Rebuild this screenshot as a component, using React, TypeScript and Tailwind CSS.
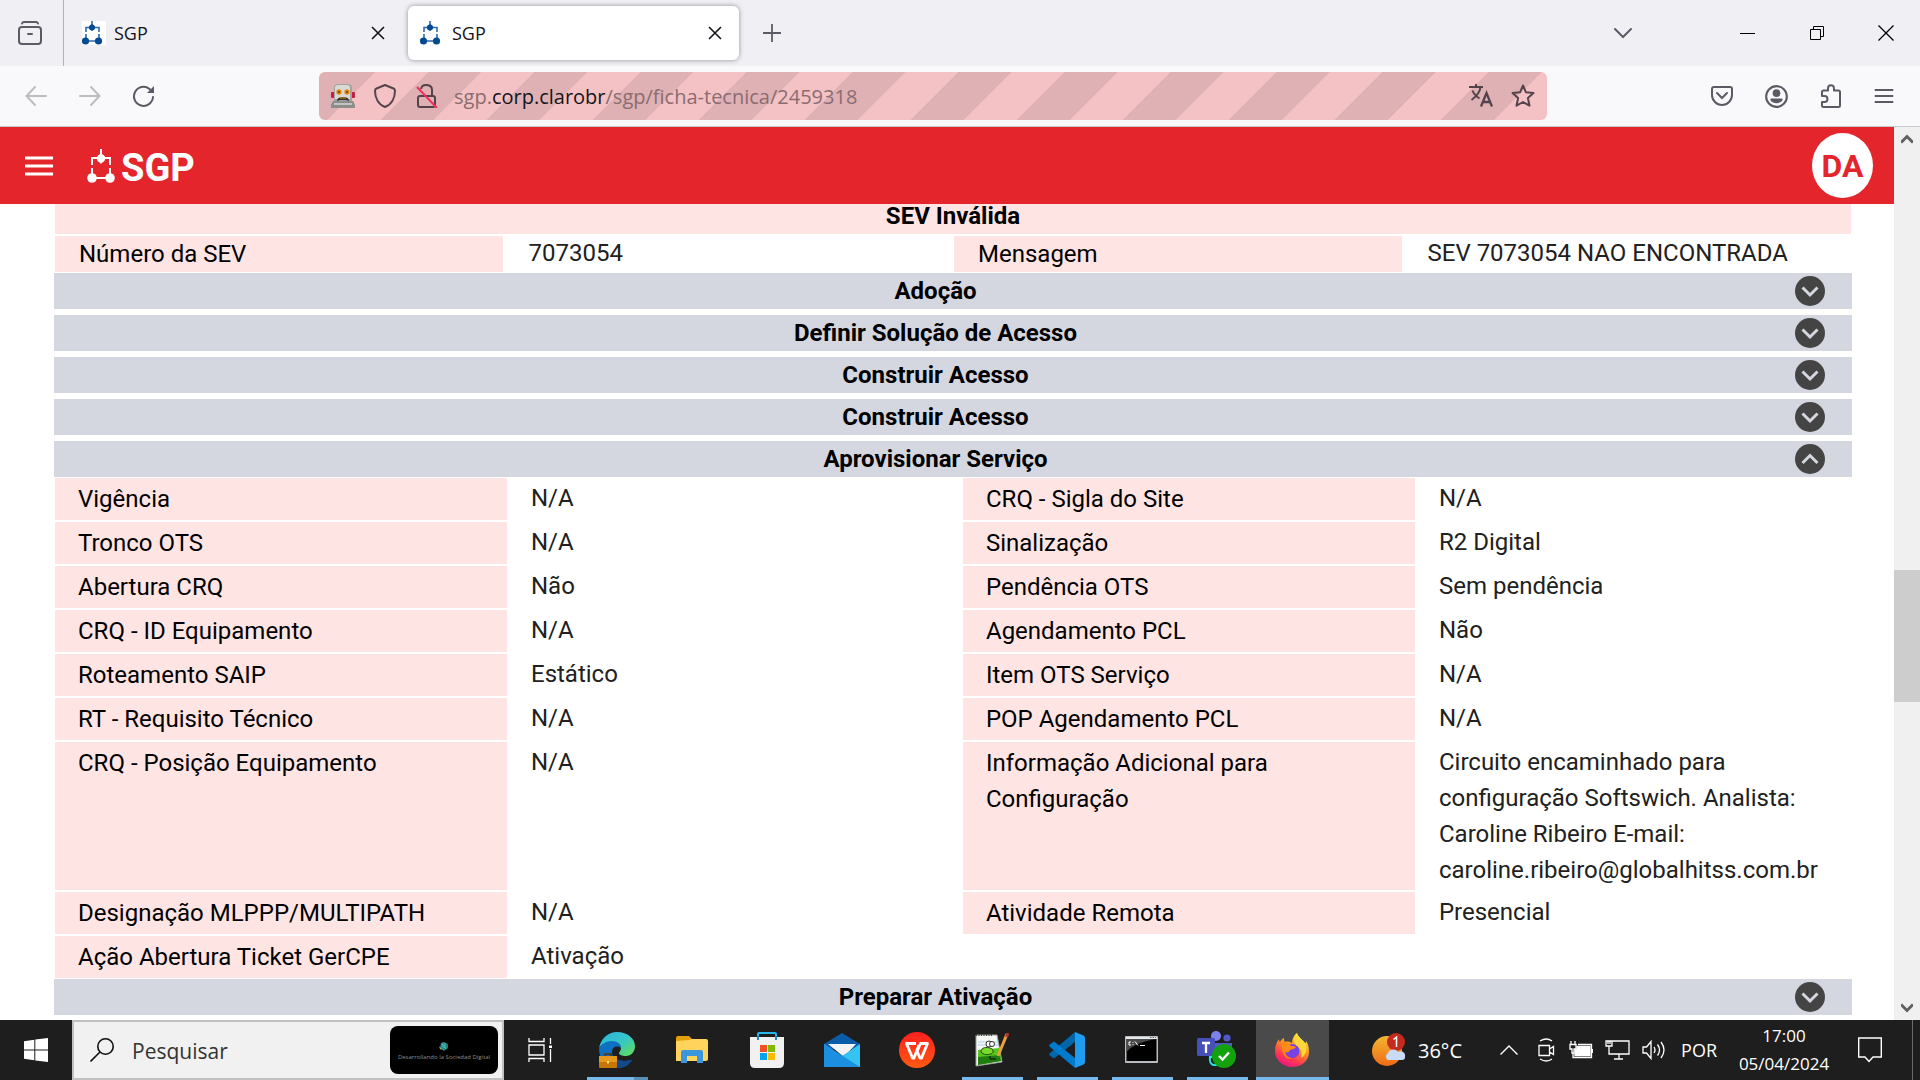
import { useState, type ReactNode } from "react";

type Pair = { label: string; value: string };

const sevRows: Pair[][] = [
  [
    { label: "Número da SEV", value: "7073054" },
    { label: "Mensagem", value: "SEV 7073054 NAO ENCONTRADA" },
  ],
];

const serviceRows: Pair[][] = [
  [{ label: "Vigência", value: "N/A" }, { label: "CRQ - Sigla do Site", value: "N/A" }],
  [{ label: "Tronco OTS", value: "N/A" }, { label: "Sinalização", value: "R2 Digital" }],
  [{ label: "Abertura CRQ", value: "Não" }, { label: "Pendência OTS", value: "Sem pendência" }],
  [{ label: "CRQ - ID Equipamento", value: "N/A" }, { label: "Agendamento PCL", value: "Não" }],
  [{ label: "Roteamento SAIP", value: "Estático" }, { label: "Item OTS Serviço", value: "N/A" }],
  [{ label: "RT - Requisito Técnico", value: "N/A" }, { label: "POP Agendamento PCL", value: "N/A" }],
  [
    { label: "CRQ - Posição Equipamento", value: "N/A" },
    {
      label: "Informação Adicional para Configuração",
      value:
        "Circuito encaminhado para configuração Softswich. Analista: Caroline Ribeiro E-mail: caroline.ribeiro@globalhitss.com.br",
    },
  ],
  [{ label: "Designação MLPPP/MULTIPATH", value: "N/A" }, { label: "Atividade Remota", value: "Presencial" }],
  [{ label: "Ação Abertura Ticket GerCPE", value: "Ativação" }],
];

/* ---------- Browser chrome ---------- */

function Favicon({ plate = false }: { plate?: boolean }) {
  return (
    <svg viewBox="0 0 24 24" className="size-6 shrink-0" aria-hidden="true">
      {plate && <rect width="24" height="24" fill="#fff" />}
      <g fill="none" stroke="#2f6aa8" strokeWidth="1.6">
        <path d="M10 0v6M4 11V6.500h13V11M4 13v6M17 13v6M4 20h13" />
      </g>
      <g fill="#044a93">
        <path d="M6.500 6.500 10 3l3.500 3.500L10 10z" />
        <circle cx="10" cy="6.500" r="3" />
        <circle cx="3.500" cy="20" r="3.600" />
        <circle cx="16.500" cy="20" r="3.600" />
      </g>
    </svg>
  );
}

function CloseTab() {
  return (
    <button type="button" aria-label="Fechar aba" className="flex size-6 items-center justify-center">
      <svg viewBox="0 0 14 14" className="size-3.5" stroke="#15141a" strokeWidth="1.6" aria-hidden="true">
        <path d="M1 1l12 12M13 1L1 13" />
      </svg>
    </button>
  );
}

function TabStrip() {
  return (
    <div className="flex h-[66px] shrink-0 items-center bg-[#f0eff4]">
      <button type="button" aria-label="Firefox View" className="flex h-full w-16 items-center border-r border-[#b4b3b9] pl-[18px]">
        <svg viewBox="0 0 24 24" className="size-6" fill="none" stroke="#5b5b66" strokeWidth="2" strokeLinecap="round" aria-hidden="true">
          <path d="M4 2.500C4.300 1.600 5 1 6 1h12c1 0 1.700.6 2 1.500" />
          <rect x="1" y="6" width="22" height="17" rx="3" />
          <path d="M10 13h4" />
        </svg>
      </button>
      <div className="flex h-[54px] w-[344px] items-center pl-[18px] pr-[18px]">
        <Favicon plate />
        <span className="ml-2 flex-1 text-lg text-[#15141a]">SGP</span>
        <CloseTab />
      </div>
      <div className="flex h-[54px] w-[331px] items-center rounded-md bg-white pl-3 pr-3 shadow-[0_0_5px_rgba(0,0,0,0.4)]">
        <Favicon />
        <span className="ml-2 flex-1 text-lg text-[#15141a]">SGP</span>
        <CloseTab />
      </div>
      <button type="button" aria-label="Nova aba" className="ml-6">
        <svg viewBox="0 0 18 18" className="size-[18px]" stroke="#5b5b66" strokeWidth="1.8" aria-hidden="true">
          <path d="M9 0v18M0 9h18" />
        </svg>
      </button>
      <div className="ml-auto flex h-full items-center">
        <button type="button" aria-label="Listar abas" className="mr-[62px] flex w-14 justify-center">
          <svg viewBox="0 0 20 12" className="h-3 w-5" fill="none" stroke="#5b5b66" strokeWidth="2" strokeLinecap="round" aria-hidden="true">
            <path d="M2 2l8 8 8-8" />
          </svg>
        </button>
        <button type="button" aria-label="Minimizar" className="flex h-full w-[69px] items-center justify-center">
          <span className="h-px w-[15px] bg-black" />
        </button>
        <button type="button" aria-label="Restaurar" className="flex h-full w-[69px] items-center justify-center">
          <svg viewBox="0 0 14 14" className="size-3.5" fill="none" stroke="#000" aria-hidden="true">
            <path d="M.5 3.500h10v10h-10zM3.500 3.500v-3h10v10h-3" />
          </svg>
        </button>
        <button type="button" aria-label="Fechar" className="flex h-full w-[69px] items-center justify-center">
          <svg viewBox="0 0 16 16" className="size-4" stroke="#000" strokeWidth="1.300" aria-hidden="true">
            <path d="M.5.5l15 15M15.500.5l-15 15" />
          </svg>
        </button>
      </div>
    </div>
  );
}

function AddressBar() {
  return (
    <div className="mr-[164px] ml-[164px] flex h-12 flex-1 items-center rounded-md bg-[repeating-linear-gradient(-45deg,#f4c2c5_0px,#f4c2c5_37px,#dfb1b4_38px,#dfb1b4_75px)] pr-3 pl-3">
      <svg viewBox="0 0 24 24" className="size-6 shrink-0" aria-hidden="true">
        <rect x="0" y="8" width="4" height="6" rx="1" fill="#c41f45" />
        <rect x="20" y="8" width="4" height="6" rx="1" fill="#c41f45" />
        <path d="M3 4q0-4 4-4h10q4 0 4 4v13H3z" fill="#a3a3a0" />
        <path d="M4 4q0-3 3-3h9q3 0 3 3v11H4z" fill="#d9d9d5" />
        <path d="M2 17h20l2 4v3H0v-3z" fill="#8d8e8c" />
        <path d="M3 19h18v2H3z" fill="#c3c4c1" />
        <circle cx="8" cy="8" r="2.700" fill="#e68a12" />
        <circle cx="16" cy="8" r="2.700" fill="#e68a12" />
        <circle cx="8" cy="8" r="1" fill="#5a3b13" />
        <circle cx="16" cy="8" r="1" fill="#5a3b13" />
        <path d="M6 17q0-4 6-4t6 4l-3-1H9z" fill="#35312e" />
        <path d="M9 14h6" stroke="#e68a12" />
      </svg>
      <svg viewBox="0 0 22 24" className="ml-[19px] h-6 w-[22px] shrink-0" fill="none" stroke="#53444b" strokeWidth="2" strokeLinejoin="round" aria-hidden="true">
        <path d="M11 1l8.500 3.500q1.500.7 1.500 2.200C21 14 17.500 20.500 11 23 4.500 20.500 1 14 1 6.700q0-1.500 1.500-2.200z" />
      </svg>
      <svg viewBox="0 0 22 24" className="ml-5 h-6 w-[22px] shrink-0" fill="none" stroke="#53444b" strokeWidth="2" aria-hidden="true">
        <rect x="2" y="12" width="17" height="11" rx="2" />
        <path d="M5 5c1-6 11-5 11 1v6" />
        <path d="M1 3l20 21" stroke="#ee2f5b" />
      </svg>
      <div
        role="textbox"
        aria-label="Endereço"
        contentEditable
        suppressContentEditableWarning
        spellCheck={false}
        className="ml-4 flex-1 pt-0.5 text-xl whitespace-nowrap text-[#8a6c71] outline-none"
      >
        sgp.<span className="text-[#15141a]">corp.clarobr</span>/sgp/ficha-tecnica/2459318
      </div>
      <button type="button" aria-label="Traduzir página">
        <svg viewBox="0 0 24 24" className="size-6" fill="none" stroke="#53444b" strokeWidth="2" aria-hidden="true">
          <path d="M0 3h14M7 0v3M2.500 16C8 12 11 8 11.500 3M3.500 6.500c1 3 4 6 7 8" />
          <path d="M12 22.500L17.500 9 23 22.500M14 18h7" strokeWidth="2.300" />
        </svg>
      </button>
      <button type="button" aria-label="Favoritar" className="ml-[18px]">
        <svg viewBox="0 0 24 24" className="size-6" fill="none" stroke="#53444b" strokeWidth="2" strokeLinejoin="round" aria-hidden="true">
          <path d="M12 1.500l3 6.800 7.500.8-5.600 5 1.600 7.600L12 18l-6.500 3.700 1.600-7.600-5.600-5 7.500-.8z" />
        </svg>
      </button>
    </div>
  );
}

function Toolbar() {
  return (
    <div className="flex h-[61px] shrink-0 items-center border-b border-[#c9c9cc] bg-[#f9f9fb] pr-[26px] pl-[25px]">
      <button type="button" aria-label="Voltar">
        <svg viewBox="0 0 22 20" className="h-5 w-[22px]" fill="none" stroke="#bdbcc2" strokeWidth="2" strokeLinecap="round" aria-hidden="true">
          <path d="M21 10H1.500M10 1L1.500 10l8.500 9" />
        </svg>
      </button>
      <button type="button" aria-label="Avançar" className="ml-8">
        <svg viewBox="0 0 22 20" className="h-5 w-[22px]" fill="none" stroke="#bdbcc2" strokeWidth="2" strokeLinecap="round" aria-hidden="true">
          <path d="M1 10h19.500M12 1l8.500 9-8.500 9" />
        </svg>
      </button>
      <button type="button" aria-label="Recarregar" className="ml-8">
        <svg viewBox="0 0 22 22" className="size-[22px]" fill="none" stroke="#5b5b66" strokeWidth="2" strokeLinecap="round" aria-hidden="true">
          <path d="M20 12a9.500 9.500 0 1 1-3.500-8l2 1.800" />
          <path d="M21 1v7h-7z" fill="#5b5b66" stroke="none" />
        </svg>
      </button>
      <AddressBar />
      <div className="flex items-center gap-8">
        <button type="button" aria-label="Pocket">
          <svg viewBox="0 0 22 20" className="h-5 w-[22px]" fill="none" stroke="#5b5b66" strokeWidth="2" strokeLinecap="round" aria-hidden="true">
            <path d="M3 1h16q2 0 2 2v6a10 10 0 0 1-20 0V3q0-2 2-2z" />
            <path d="M6 7l5 5 5-5" />
          </svg>
        </button>
        <button type="button" aria-label="Conta">
          <svg viewBox="0 0 24 24" className="size-[23px]" aria-hidden="true">
            <circle cx="12" cy="12" r="10.800" fill="none" stroke="#5b5b66" strokeWidth="2.200" />
            <circle cx="12" cy="8.500" r="4" fill="#5b5b66" />
            <path d="M5.500 15.500q0-1.500 1.500-1.500h10q1.500 0 1.500 1.500c-1 2.500-4 3.500-6.500 3.500s-5.500-1-6.500-3.500z" fill="#5b5b66" />
          </svg>
        </button>
        <button type="button" aria-label="Extensões">
          <svg viewBox="0 0 22 24" className="h-6 w-[22px]" fill="none" stroke="#5b5b66" strokeWidth="2" strokeLinejoin="round" aria-hidden="true">
            <path d="M2 8q0-1.500 1.500-1.500H8V4.200a3 3 0 0 1 6 0v2.300h4.500Q20 6.500 20 8v13.500q0 1.500-1.500 1.500h-15Q2 23 2 21.500V18h2.500a3 3 0 0 0 0-6H2z" />
          </svg>
        </button>
        <button type="button" aria-label="Menu">
          <svg viewBox="0 0 20 16" className="h-4 w-5" stroke="#5b5b66" strokeWidth="2" strokeLinecap="round" aria-hidden="true">
            <path d="M1.500 2h17M1.500 8h17M1.500 14h17" />
          </svg>
        </button>
      </div>
    </div>
  );
}

/* ---------- Application ---------- */

function AppHeader() {
  return (
    <header className="flex h-[77px] shrink-0 items-center bg-[#e5252c] pr-[21px] pl-[25px] text-white">
      <button type="button" aria-label="Abrir menu">
        <svg viewBox="0 0 28 20" className="h-5 w-7" stroke="#fff" strokeWidth="3" aria-hidden="true">
          <path d="M0 2h28M0 10h28M0 18h28" />
        </svg>
      </button>
      <a href="#" className="ml-[34px] flex items-center gap-[6px]">
        <svg viewBox="0 0 28 34" className="h-[34px] w-7" fill="none" stroke="#fff" strokeWidth="2" aria-hidden="true">
          <path d="M14 0v9M5 16V9h18v7M5 19v10M23 19v10M5 29h18" />
          <g fill="#fff" stroke="none">
            <path d="M9 9l5-5 5 5-5 6z" />
            <circle cx="14" cy="9.500" r="4" />
            <circle cx="5" cy="29" r="4.800" />
            <circle cx="23" cy="29" r="4.800" />
          </g>
        </svg>
        <span className="pt-1 font-['Roboto',sans-serif] text-[38px] leading-10 font-bold">SGP</span>
      </a>
      <button
        type="button"
        aria-label="Conta DA"
        className="ml-auto flex h-[65px] w-[61px] items-center justify-center rounded-[50%] bg-white font-['Roboto',sans-serif] text-[32px] font-bold text-[#e5252c]"
      >
        DA
      </button>
    </header>
  );
}

function Section({ title, defaultOpen = false, children }: { title: string; defaultOpen?: boolean; children?: ReactNode }) {
  const [open, setOpen] = useState(defaultOpen);
  const hasBody = open && children;
  return (
    <section className={hasBody ? "" : "mb-1.5"}>
      <button
        type="button"
        aria-expanded={open}
        onClick={() => setOpen(!open)}
        className="flex h-9 w-full items-center bg-[#d4d7df] pr-[27px] pl-[22px] text-black"
      >
        <span className="flex-1 text-center font-bold">{title}</span>
        <svg viewBox="0 0 30 30" className="size-[30px] shrink-0" aria-hidden="true">
          <circle cx="15" cy="15" r="15" fill="#444" />
          <path d={open ? "M7.500 19l7.500-7.500 7.500 7.500" : "M7.500 11.500L15 19l7.500-7.500"} fill="none" stroke="#d4d7df" strokeWidth="3" />
        </svg>
      </button>
      {hasBody}
    </section>
  );
}

function SevTable() {
  return (
    <table className="w-full table-fixed border-separate border-spacing-0">
      <thead>
        <tr>
          <th colSpan={4} className="border border-t-0 border-white bg-[#fee5e3] px-0 pt-0 pb-1.5 text-center leading-6 font-bold">
            SEV Inválida
          </th>
        </tr>
      </thead>
      <tbody>
        {sevRows.map((row) => (
          <tr key={row[0].label}>
            {row.map((pair) => [
              <th key={pair.label} scope="row" className="border border-white bg-[#fee5e3] px-6 py-0 text-left align-top font-normal">
                {pair.label}
              </th>,
              <td key={`${pair.label}-v`} className="px-[25px] py-0 align-top text-[#212121]">
                {pair.value}
              </td>,
            ])}
          </tr>
        ))}
      </tbody>
    </table>
  );
}

function ServiceTable() {
  return (
    <table className="w-full table-fixed border-separate border-spacing-0">
      <colgroup>
        <col className="w-[25.25%]" />
        <col className="w-[25.25%]" />
        <col className="w-[25.25%]" />
        <col />
      </colgroup>
      <tbody>
        {serviceRows.map((row) => (
          <tr key={row[0].label}>
            {row.map((pair) => [
              <th key={pair.label} scope="row" className="border border-white bg-[#fee5e3] px-[23px] py-[3px] text-left align-top font-normal">
                {pair.label}
              </th>,
              <td key={`${pair.label}-v`} className="px-[23px] py-[3px] align-top text-[#212121]">
                {pair.value}
              </td>,
            ])}
          </tr>
        ))}
      </tbody>
    </table>
  );
}

function ScrollBar() {
  return (
    <div className="flex w-[26px] shrink-0 flex-col items-center bg-[#f0f0f0]">
      <svg viewBox="0 0 12 10" className="mt-[7px] h-2.5 w-3" fill="none" stroke="#606060" strokeWidth="3" aria-hidden="true">
        <path d="M0 8.500L6 2.500l6 6" />
      </svg>
      <div className="flex w-full flex-1 flex-col py-2">
        <div className="grow-[417]" />
        <div className="grow-[132] bg-[#cdcdcd]" />
        <div className="grow-[293]" />
      </div>
      <svg viewBox="0 0 12 10" className="mb-[7px] h-2.5 w-3" fill="none" stroke="#606060" strokeWidth="3" aria-hidden="true">
        <path d="M0 1.500l6 6 6-6" />
      </svg>
    </div>
  );
}

/* ---------- Taskbar ---------- */

const EdgeIcon = (
  <svg viewBox="0 0 36 36" className="size-9" aria-hidden="true">
    <defs>
      <linearGradient id="edgeTop" x1="0" y1="0" x2="1" y2="1">
        <stop offset="0" stopColor="#2bb4e0" />
        <stop offset=".5" stopColor="#35c6c9" />
        <stop offset="1" stopColor="#66e04d" />
      </linearGradient>
    </defs>
    <path d="M0 17C1 7 9 0 18 0c11 0 18 7 18 14 0 6-4 10-9 10-4 0-7-1-7-3 0-1 2-2 2-5 0-3-3-6-8-6C7 10 1 13 0 17z" fill="url(#edgeTop)" />
    <path d="M0 17c2-5 7-8 13-8 5 0 9 3 9 7-4-3-9-1-9 4 0 7 7 11 20 8-4 6-9 8-15 8C8 36 0 28 0 17z" fill="#0f6fc0" />
    <path d="M13 20c0 7 8 11 20 8-4 6-9 8-15 8-6-3-8-12-5-16z" fill="#114a8b" />
    <rect x="0" y="24" width="18" height="12" rx="1" fill="#c77408" />
    <path d="M0 24h18v6H0z" fill="#e59a1c" />
    <path d="M6 24v-2h6v2" fill="none" stroke="#5b3407" strokeWidth="1.500" />
    <rect x="8" y="29" width="2" height="2.500" fill="#ffe07a" />
  </svg>
);

const FolderIcon = (
  <svg viewBox="0 0 32 28" className="h-7 w-8" aria-hidden="true">
    <path d="M0 2q0-2 2-2h11l3 3v6H0z" fill="#e3a008" />
    <path d="M0 5l13-1 3-1h14q2 0 2 2v18q0 2-2 2H0z" fill="#ffd35c" />
    <path d="M5 27V16q0-2 2-2h18q2 0 2 2v11h-6v-7H11v7z" fill="#3a96dd" />
  </svg>
);

const StoreIcon = (
  <svg viewBox="0 0 36 36" className="size-9" aria-hidden="true">
    <path d="M9 7V2q0-1 1-1h16q1 0 1 1v5" fill="none" stroke="#27b7f0" strokeWidth="2" />
    <path d="M1 5h34v26q0 5-5 5H6q-5 0-5-5z" fill="#f1f1f1" />
    <path d="M9 8V4M27 8V4" stroke="#1c86c9" strokeWidth="2" />
    <rect x="11" y="13" width="7" height="7" fill="#f25022" />
    <rect x="19" y="13" width="7" height="7" fill="#7fba00" />
    <rect x="11" y="21" width="7" height="7" fill="#00a4ef" />
    <rect x="19" y="21" width="7" height="7" fill="#ffb900" />
  </svg>
);

const MailIcon = (
  <svg viewBox="0 0 36 34" className="h-[34px] w-9" aria-hidden="true">
    <path d="M0 11L18 0l18 11v5H0z" fill="#0a5ba8" />
    <path d="M4 11h28L20 24z" fill="#f3f3f5" />
    <path d="M0 11l18 12 18-12v23H0z" fill="#35c3f2" />
    <path d="M0 11l36 23H0z" fill="#1d8fe0" />
  </svg>
);

const WpsIcon = (
  <svg viewBox="0 0 36 36" className="size-9" aria-hidden="true">
    <defs>
      <linearGradient id="wps" x1="0" y1="0" x2="0" y2="1">
        <stop offset="0" stopColor="#ff1f1f" />
        <stop offset="1" stopColor="#ff5a10" />
      </linearGradient>
    </defs>
    <circle cx="18" cy="18" r="18" fill="url(#wps)" />
    <path d="M17 11.500H7.500l6 14.500h1.500L20 13M18 19l3 7h1.500l6-14.500h-7L17 22" fill="none" stroke="#fff" strokeWidth="2.800" strokeLinejoin="round" />
  </svg>
);

const NotepadIcon = (
  <svg viewBox="0 0 34 34" className="size-[34px]" aria-hidden="true">
    <path d="M1 2h21l5 27-26 4z" fill="#f4f7f4" stroke="#9aa09a" />
    <path d="M1 2h17" stroke="#444" strokeWidth="2" strokeDasharray="1 1.500" />
    <path d="M3 9h20M3 12h20" stroke="#a9cde6" />
    <path d="M3 17l22-2 1 13-23 4z" fill="#57c51d" />
    <path d="M3 24l22-2 1 6-23 4z" fill="#217d12" />
    <path d="M6 19c0-5 6-5 9-4 4 1 4 5 1 6s-8 1-10-2z" fill="#7bd92c" stroke="#1c4d10" />
    <circle cx="14" cy="11" r="3" fill="#fff" stroke="#333" />
    <circle cx="17" cy="11" r="2.500" fill="#fff" stroke="#333" />
    <path d="M15 26h6M15 23v3" stroke="#132d0c" strokeWidth="1.500" />
    <path d="M32 1L23 23" stroke="#e9a33a" strokeWidth="3" />
    <path d="M33 0l-1.500 4" stroke="#b3322a" strokeWidth="3" />
  </svg>
);

const CodeIcon = (
  <svg viewBox="0 0 36 36" className="size-9" aria-hidden="true">
    <path d="M26 0v10L5 26.500l-4-2.700q-1.500-1.300 0-2.800z" fill="#0065a9" />
    <path d="M26 36V26L5 9.500 1 12.200q-1.500 1.300 0 2.800z" fill="#007acc" />
    <path d="M26 0l8.500 3.500Q36 4.200 36 6v24q0 1.800-1.500 2.500L26 36z" fill="#1f9cf0" />
  </svg>
);

const TerminalIcon = (
  <svg viewBox="0 0 33 27" className="h-[27px] w-[33px]" aria-hidden="true">
    <rect width="33" height="27" rx="1" fill="#b9bdc2" />
    <path d="M1 1h31v2H1z" fill="#e6e9ec" />
    <path d="M25 1.500h6" stroke="#5d6d8c" strokeDasharray="1.500 1" />
    <rect x="1.500" y="3" width="30" height="22" fill="#000" />
    <path d="M1.500 3h30C20 5 8 8 1.500 16z" fill="#4a4a4a" />
    <path d="M6 6H4v3h2M8 6v.8M8 8.200V9M10 5.500l3 4M15 9.500h5" fill="none" stroke="#fff" />
  </svg>
);

const TeamsIcon = (
  <svg viewBox="0 0 40 38" className="h-[38px] w-10" aria-hidden="true">
    <circle cx="19" cy="5" r="5" fill="#7b83eb" />
    <circle cx="30" cy="7" r="3.600" fill="#5059c9" />
    <path d="M14 12h21v10H14z" fill="#5059c9" />
    <path d="M12 25q-1 8 4 10h6V24z" fill="#23e0e6" />
    <path d="M14 27q-1 5 3 6h3v-6z" fill="#111" />
    <rect x="0" y="7" width="18" height="18" rx="1.500" fill="#4650b8" />
    <path d="M5 12h8M9 12v10" stroke="#fff" strokeWidth="2.300" />
    <circle cx="27" cy="25" r="12" fill="#13a10e" />
    <path d="M22 25l3.500 3.500L32 21.500" fill="none" stroke="#fff" strokeWidth="2.400" />
  </svg>
);

const FirefoxIcon = (
  <svg viewBox="0 0 34 34" className="size-[34px]" aria-hidden="true">
    <defs>
      <linearGradient id="ffBody" x1=".8" y1="0" x2=".3" y2="1">
        <stop offset="0" stopColor="#fff04a" />
        <stop offset=".4" stopColor="#ff9a1f" />
        <stop offset=".75" stopColor="#ff3750" />
        <stop offset="1" stopColor="#e5158b" />
      </linearGradient>
    </defs>
    <path d="M22 0c1 4 5 6 8 10 1 0 1-1 1-2 3 4 3 8 3 11 0 9-8 15-17 15S0 27 0 18c0-4 1-8 4-12 0 1 0 2 1 3 1-2 2-3 4-4 0 2 0 3 1 4 3-1 5 0 7 1 0-4 2-8 5-10z" fill="url(#ffBody)" />
    <circle cx="17.500" cy="18" r="7" fill="#7543e3" />
    <path d="M7 10c4-1 7 0 9 3 2 0 4 0 5 1-1 2-4 2-6 3-1 3-4 3-5 1 0 5 4 8 9 7-8 3-13-3-12-15z" fill="#ff8a16" />
    <path d="M22 0c1 4 5 6 8 10 3 6 1 12-4 15 2-6-1-10-4-12-4-3-3-9 0-13z" fill="#ffd93b" />
  </svg>
);

const apps: { name: string; icon: ReactNode; state?: "running" | "grouped" | "active" }[] = [
  { name: "Microsoft Edge", icon: EdgeIcon, state: "grouped" },
  { name: "Explorador de Arquivos", icon: FolderIcon },
  { name: "Microsoft Store", icon: StoreIcon },
  { name: "Email", icon: MailIcon },
  { name: "WPS Office", icon: WpsIcon },
  { name: "Notepad++", icon: NotepadIcon, state: "running" },
  { name: "Visual Studio Code", icon: CodeIcon, state: "running" },
  { name: "Prompt de Comando", icon: TerminalIcon, state: "running" },
  { name: "Microsoft Teams", icon: TeamsIcon, state: "running" },
  { name: "Firefox", icon: FirefoxIcon, state: "active" },
];

function TaskbarApp({ name, icon, state }: (typeof apps)[number]) {
  return (
    <button type="button" aria-label={name} className="flex h-full w-[75px] flex-col items-center px-px">
      <span
        className={
          state === "active"
            ? "flex w-full flex-1 items-center justify-center bg-[#4a4a4a] pt-0.5 pr-0.5"
            : "flex w-full flex-1 items-center justify-center pt-0.5 pr-0.5"
        }
      >
        {icon}
      </span>
      {state === "active" && <span className="h-[3px] w-full bg-[#76b9ed]" />}
      {state === "running" && <span className="h-[3px] w-[61px] bg-[#76b9ed]" />}
      {state === "grouped" && (
        <span className="flex h-[3px] w-[61px]">
          <span className="w-[47px] bg-[#76b9ed]" />
          <span className="flex-1 bg-[#5a8fb8]" />
        </span>
      )}
      {!state && <span className="h-[3px]" />}
    </button>
  );
}

function Taskbar() {
  return (
    <footer className="flex h-[60px] shrink-0 items-center bg-[#1e1e1e] text-white">
      <button type="button" aria-label="Iniciar" className="flex h-full w-[72px] items-center justify-center">
        <svg viewBox="0 0 24 24" className="size-6" fill="#fff" aria-hidden="true">
          <path d="M0 3.200L10.300 1.700v9.800H0zM11.300 1.600L24 0v11.500H11.300zM0 12.500h10.300v9.800L0 20.800zM11.300 12.500H24V24l-12.700-1.600z" />
        </svg>
      </button>
      <label className="flex h-full w-[432px] items-center border-2 border-[#c1c1c1] bg-[#f1f1f1] pr-1 pl-4">
        <svg viewBox="0 0 24 24" className="size-6 shrink-0" fill="none" stroke="#111" strokeWidth="1.600" aria-hidden="true">
          <circle cx="15.500" cy="8.500" r="7.700" />
          <path d="M10 14L.5 23.500" />
        </svg>
        <input
          type="text"
          aria-label="Pesquisar"
          placeholder="Pesquisar"
          className="ml-[18px] min-w-0 flex-1 bg-transparent pt-1 text-[21px] outline-none placeholder:text-[#333]"
        />
        <span className="flex h-12 w-[108px] shrink-0 flex-col items-center rounded-lg bg-black pt-4">
          <svg viewBox="0 0 10 10" className="size-2.5" aria-hidden="true">
            <path d="M2 1l3-1v9L1 6z" fill="#2d8f9b" />
            <path d="M0 4l3 4-2-1z" fill="#d7d23a" />
            <path d="M5 0l4 2v4L5 9z" fill="#17807f" />
            <path d="M3 2l4 5M6 1v5" stroke="#7cd6d8" strokeWidth=".7" />
          </svg>
          <span className="text-[6px] leading-[10px] whitespace-nowrap text-[#8c8c8c]">Desarrollando la Sociedad Digital</span>
        </span>
      </label>
      <button type="button" aria-label="Visão de tarefas" className="flex h-full w-[76px] items-center justify-center pr-1">
        <svg viewBox="0 0 25 24" className="h-6 w-[25px]" fill="none" stroke="#fff" strokeWidth="1.300" aria-hidden="true">
          <path d="M1 0v3.500h15V0M1 7h15v10H1zM1 24v-3.500h15V24M22.500 0v6M22.500 11v13" />
          <rect x="21" y="7.500" width="3" height="2.500" fill="#fff" stroke="none" />
        </svg>
      </button>
      {apps.map((app) => (
        <TaskbarApp key={app.name} {...app} />
      ))}
      <div className="ml-auto flex h-full items-center">
        <button type="button" aria-label="Clima" className="flex items-center gap-3">
          <svg viewBox="0 0 34 34" className="size-[34px]" aria-hidden="true">
            <defs>
              <linearGradient id="sun" x1="0" y1="0" x2="0" y2="1">
                <stop offset="0" stopColor="#f2b632" />
                <stop offset="1" stopColor="#ef6c16" />
              </linearGradient>
            </defs>
            <circle cx="15" cy="18" r="15" fill="url(#sun)" />
            <circle cx="24" cy="9" r="9" fill="#c42b1c" />
            <path d="M16 27a4 4 0 0 1 0-7c1-4 8-5 10-1 4-2 8 1 7 5 0 2-1 3-3 3z" fill="#c9dbf7" />
            <path d="M21.500 6.500L24.500 4v10" fill="none" stroke="#fff" strokeWidth="1.500" />
          </svg>
          <span className="pt-0.5 text-xl">36°C</span>
        </button>
        <div className="ml-[38px] flex items-center">
          <svg viewBox="0 0 18 10" className="h-2.5 w-[18px]" fill="none" stroke="#fff" strokeWidth="1.400" aria-hidden="true">
            <path d="M.5 9.500L9 1l8.500 8.500" />
          </svg>
          <svg viewBox="0 0 17 24" className="ml-5 h-6 w-[17px]" fill="none" stroke="#fff" strokeWidth="1.300" aria-hidden="true">
            <path d="M2 3q6.500-4 12 0M2 21q6.500 4 12 0M1 7.500h10.500v10H1zM11.500 11l4-2.500v8l-4-2.500z" />
          </svg>
          <svg viewBox="0 0 24 18" className="ml-3.5 h-[18px] w-6" fill="none" stroke="#fff" strokeWidth="1.300" aria-hidden="true">
            <path d="M2 0v3M6 0v3M1 3.500h6V8H5v4H3V8H1zM4 12v4.500h18.500v-13H9" />
            <path d="M6 14.500V9h2V5.500h13v9z" fill="#fff" />
            <path d="M23.500 8v4" />
          </svg>
          <svg viewBox="0 0 25 20" className="ml-3 h-5 w-[25px]" fill="none" stroke="#fff" strokeWidth="1.300" aria-hidden="true">
            <path d="M7 1h17v13H4V9M1 1h6v5H1zM3 1v3M5 1v3M4 6v3M14 14v5M9 19h9" />
          </svg>
          <svg viewBox="0 0 23 20" className="ml-3 h-5 w-[23px]" fill="none" stroke="#fff" strokeWidth="1.300" aria-hidden="true">
            <path d="M1 7h3.500L9 1.500v17L4.500 13H1zM12 7q2 3 0 6M15.500 4.500q4 5.500 0 11M19 2q6 8 0 16" />
          </svg>
          <span className="ml-4 text-lg">POR</span>
        </div>
        <button type="button" aria-label="Data e hora" className="ml-[18px] flex w-[98px] flex-col items-center text-[17px] leading-7">
          <span>17:00</span>
          <span>05/04/2024</span>
        </button>
        <button type="button" aria-label="Notificações" className="ml-[25px]">
          <svg viewBox="0 0 24 26" className="h-[26px] w-6" fill="none" stroke="#fff" strokeWidth="1.400" aria-hidden="true">
            <path d="M.7 1h22.600v19H15l-4 4.500L7 20H.7z" />
          </svg>
        </button>
        <span className="mr-[7px] ml-[30px] h-full w-px bg-[#6b6b6b]" />
      </div>
    </footer>
  );
}

export default function App() {
  return (
    <div className="flex h-screen flex-col overflow-hidden bg-white font-['Open_Sans',sans-serif]">
      <TabStrip />
      <Toolbar />
      <div className="flex min-h-0 flex-1 font-['Roboto',sans-serif]">
        <div className="flex min-w-0 flex-1 flex-col">
          <AppHeader />
          <main className="min-h-0 flex-1 overflow-hidden pr-[42px] pl-[54px] text-2xl leading-9 text-black">
            <SevTable />
            <Section title="Adoção" />
            <Section title="Definir Solução de Acesso" />
            <Section title="Construir Acesso" />
            <Section title="Construir Acesso" />
            <Section title="Aprovisionar Serviço" defaultOpen>
              <ServiceTable />
            </Section>
            <Section title="Preparar Ativação" />
          </main>
        </div>
        <ScrollBar />
      </div>
      <Taskbar />
    </div>
  );
}
